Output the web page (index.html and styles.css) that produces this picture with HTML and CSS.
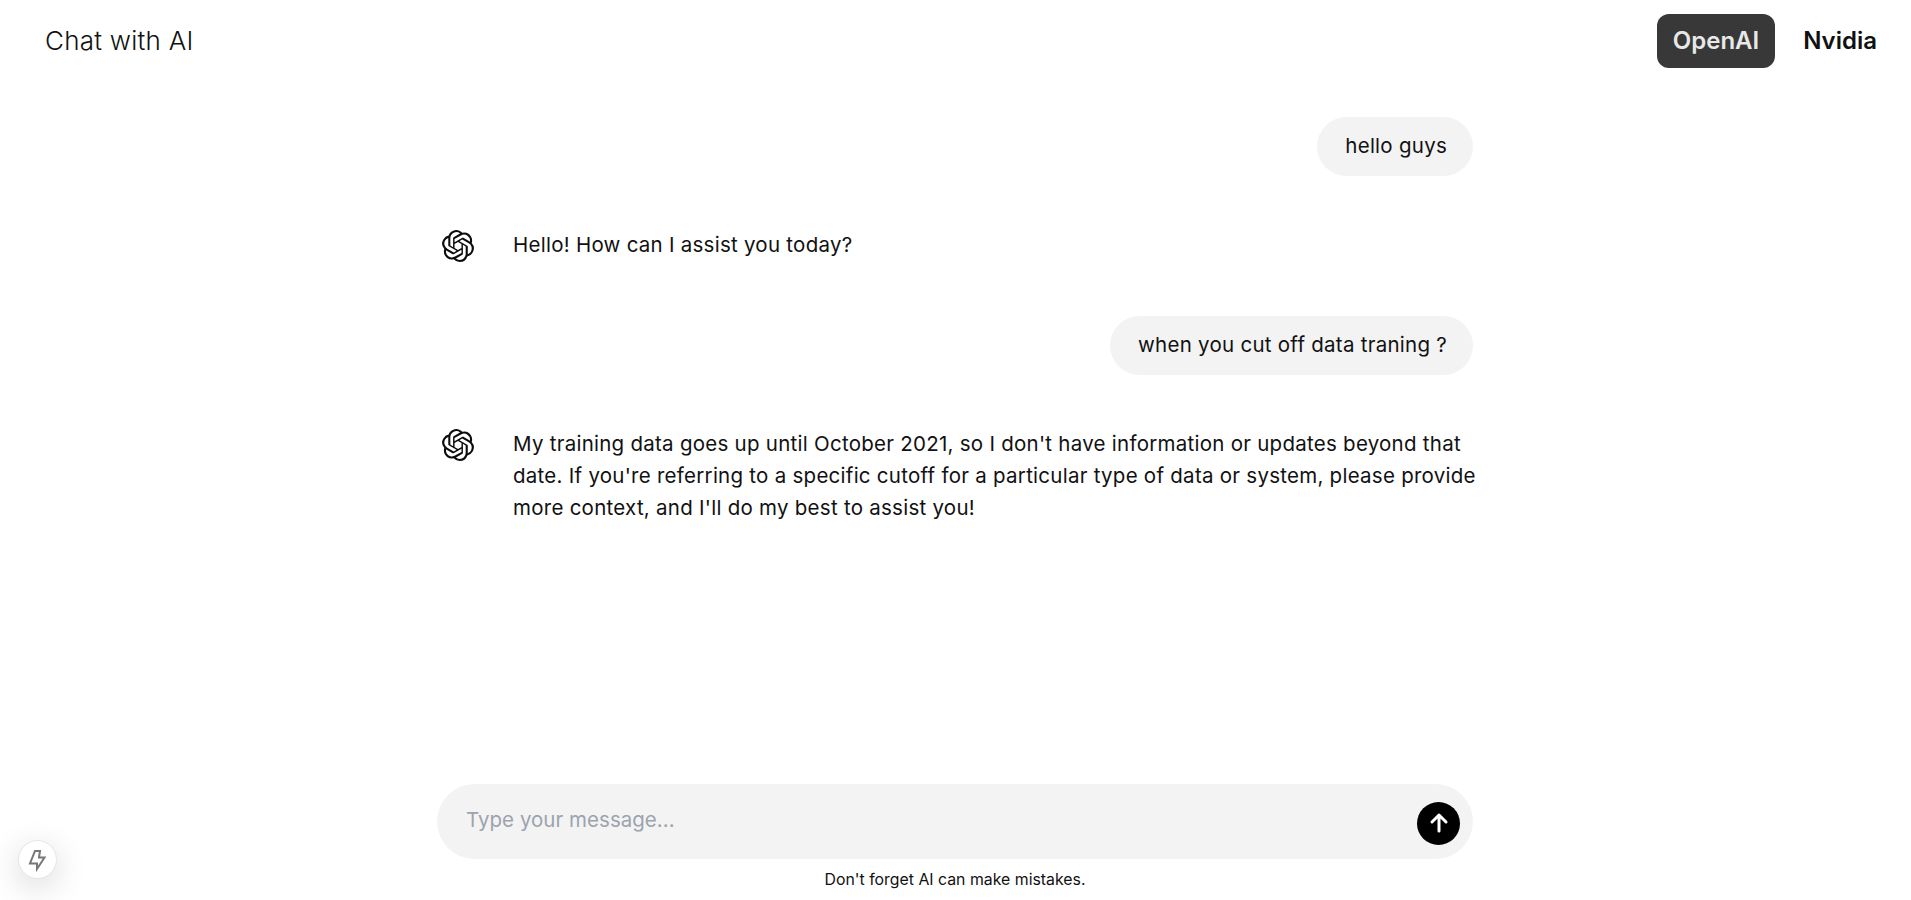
FILE: index.html
```html
<!DOCTYPE html>
<html lang="en">
<head>
<meta charset="utf-8">
<title>Chat with AI</title>
<link rel="stylesheet" href="styles.css">
</head>
<body>
<header class="topbar">
  <h1 class="title">Chat with AI</h1>
  <nav class="providers">
    <button class="provider provider-active">OpenAI</button>
    <button class="provider">Nvidia</button>
  </nav>
</header>
<main class="chat">
  <section class="messages">
    <div class="bubble">hello guys</div>
    <div class="reply">
      <svg class="logo" viewBox="0 0 24 24"><path d="M22.2819 9.8211a5.9847 5.9847 0 0 0-.5157-4.9108 6.0462 6.0462 0 0 0-6.5098-2.9A6.0651 6.0651 0 0 0 4.9807 4.1818a5.9847 5.9847 0 0 0-3.9977 2.9 6.0462 6.0462 0 0 0 .7427 7.0966 5.98 5.98 0 0 0 .511 4.9107 6.051 6.051 0 0 0 6.5146 2.9001A5.9847 5.9847 0 0 0 13.2599 24a6.0557 6.0557 0 0 0 5.7718-4.2058 5.9894 5.9894 0 0 0 3.9977-2.9001 6.0557 6.0557 0 0 0-.7475-7.0729zm-9.022 12.6081a4.4755 4.4755 0 0 1-2.8764-1.0408l.1419-.0804 4.7783-2.7582a.7948.7948 0 0 0 .3927-.6813v-6.7369l2.02 1.1686a.071.071 0 0 1 .038.052v5.5826a4.504 4.504 0 0 1-4.4945 4.4944zm-9.6607-4.1254a4.4708 4.4708 0 0 1-.5346-3.0137l.142.0852 4.783 2.7582a.7712.7712 0 0 0 .7806 0l5.8428-3.3685v2.3324a.0804.0804 0 0 1-.0332.0615L9.74 19.9502a4.4992 4.4992 0 0 1-6.1408-1.6464zM2.3408 7.8956a4.485 4.485 0 0 1 2.3655-1.9728V11.6a.7664.7664 0 0 0 .3879.6765l5.8144 3.3543-2.0201 1.1685a.0757.0757 0 0 1-.071 0l-4.8303-2.7865A4.504 4.504 0 0 1 2.3408 7.872zm16.5963 3.8558L13.1038 8.364 15.1192 7.2a.0757.0757 0 0 1 .071 0l4.8303 2.7913a4.4944 4.4944 0 0 1-.6765 8.1042v-5.6772a.79.79 0 0 0-.407-.667zm2.0107-3.0231l-.142-.0852-4.7735-2.7818a.7759.7759 0 0 0-.7854 0L9.409 9.2297V6.8974a.0662.0662 0 0 1 .0284-.0615l4.8303-2.7866a4.4992 4.4992 0 0 1 6.6802 4.66zM8.3065 12.863l-2.02-1.1638a.0804.0804 0 0 1-.038-.0567V6.0742a4.4992 4.4992 0 0 1 7.3757-3.4537l-.142.0805L8.704 5.459a.7948.7948 0 0 0-.3927.6813zm1.0976-2.3654l2.602-1.4998 2.6069 1.4998v2.9994l-2.5974 1.4997-2.6067-1.4997Z"/></svg>
      <p class="reply-text">Hello! How can I assist you today?</p>
    </div>
    <div class="bubble">when you cut off data traning ?</div>
    <div class="reply">
      <svg class="logo" viewBox="0 0 24 24"><path d="M22.2819 9.8211a5.9847 5.9847 0 0 0-.5157-4.9108 6.0462 6.0462 0 0 0-6.5098-2.9A6.0651 6.0651 0 0 0 4.9807 4.1818a5.9847 5.9847 0 0 0-3.9977 2.9 6.0462 6.0462 0 0 0 .7427 7.0966 5.98 5.98 0 0 0 .511 4.9107 6.051 6.051 0 0 0 6.5146 2.9001A5.9847 5.9847 0 0 0 13.2599 24a6.0557 6.0557 0 0 0 5.7718-4.2058 5.9894 5.9894 0 0 0 3.9977-2.9001 6.0557 6.0557 0 0 0-.7475-7.0729zm-9.022 12.6081a4.4755 4.4755 0 0 1-2.8764-1.0408l.1419-.0804 4.7783-2.7582a.7948.7948 0 0 0 .3927-.6813v-6.7369l2.02 1.1686a.071.071 0 0 1 .038.052v5.5826a4.504 4.504 0 0 1-4.4945 4.4944zm-9.6607-4.1254a4.4708 4.4708 0 0 1-.5346-3.0137l.142.0852 4.783 2.7582a.7712.7712 0 0 0 .7806 0l5.8428-3.3685v2.3324a.0804.0804 0 0 1-.0332.0615L9.74 19.9502a4.4992 4.4992 0 0 1-6.1408-1.6464zM2.3408 7.8956a4.485 4.485 0 0 1 2.3655-1.9728V11.6a.7664.7664 0 0 0 .3879.6765l5.8144 3.3543-2.0201 1.1685a.0757.0757 0 0 1-.071 0l-4.8303-2.7865A4.504 4.504 0 0 1 2.3408 7.872zm16.5963 3.8558L13.1038 8.364 15.1192 7.2a.0757.0757 0 0 1 .071 0l4.8303 2.7913a4.4944 4.4944 0 0 1-.6765 8.1042v-5.6772a.79.79 0 0 0-.407-.667zm2.0107-3.0231l-.142-.0852-4.7735-2.7818a.7759.7759 0 0 0-.7854 0L9.409 9.2297V6.8974a.0662.0662 0 0 1 .0284-.0615l4.8303-2.7866a4.4992 4.4992 0 0 1 6.6802 4.66zM8.3065 12.863l-2.02-1.1638a.0804.0804 0 0 1-.038-.0567V6.0742a4.4992 4.4992 0 0 1 7.3757-3.4537l-.142.0805L8.704 5.459a.7948.7948 0 0 0-.3927.6813zm1.0976-2.3654l2.602-1.4998 2.6069 1.4998v2.9994l-2.5974 1.4997-2.6067-1.4997Z"/></svg>
      <p class="reply-text">My training data goes up until October 2021, so I don't have information or updates beyond that date. If you're referring to a specific cutoff for a particular type of data or system, please provide more context, and I'll do my best to assist you!</p>
    </div>
  </section>
  <form class="composer">
    <input class="composer-input" type="text" placeholder="Type your message...">
    <button class="send" type="button" aria-label="Send">
      <svg viewBox="0 0 24 24" class="send-icon"><path d="M12 20V4M5 11l7-7 7 7"/></svg>
    </button>
  </form>
  <p class="disclaimer">Don't forget AI can make mistakes.</p>
</main>
<button class="dev-badge" aria-label="Route info">
  <svg viewBox="0 0 40 40" class="dev-icon"><path d="M17 11h5l-1 6.5h5.5L19 29v-5.500h-7z"/></svg>
</button>
</body>
</html>
```
FILE: styles.css
```css
* { box-sizing: border-box; }
html, body { margin: 0; height: 100%; }
body {
  height: 100vh;
  overflow: hidden;
  display: flex;
  flex-direction: column;
  background: #fff;
  color: #111;
  font-family: Inter, "Liberation Sans", sans-serif;
}
.topbar {
  height: 81px;
  flex: none;
  display: flex;
  align-items: center;
  justify-content: space-between;
  padding: 0 18px 0 45px;
}
.title { margin: 0; font-size: 26px; font-weight: 300; line-height: 32px; letter-spacing: .25px; }
.providers { display: flex; gap: 12px; }
.provider {
  height: 54px;
  padding: 0 16px;
  border: 0;
  border-radius: 12px;
  background: none;
  color: #111;
  font: 600 24px Inter, "Liberation Sans", sans-serif;
}
.provider-active { background: #383838; color: #e8e8e8; }
.chat {
  flex: 1;
  width: 1036px;
  margin-left: 437px;
  display: flex;
  flex-direction: column;
  min-height: 0;
}
.messages {
  flex: 1;
  display: flex;
  flex-direction: column;
  gap: 52px;
  padding-top: 36px;
  font-size: 20.5px;
  line-height: 32px;
  letter-spacing: .26px;
}
.bubble {
  align-self: flex-end;
  padding: 13px 26px 14px 28px;
  border-radius: 30px;
  background: #f3f3f3;
}
.reply { display: flex; gap: 39px; padding: 0 0 2px 5px; }
.logo { width: 32px; height: 32px; flex: none; margin-top: 2px; fill: #0d0d0d; }
.reply-text { margin: 1px -8px 0 0; }
.composer {
  height: 75px;
  flex: none;
  display: flex;
  align-items: center;
  padding: 0 13px 0 29px;
  border-radius: 38px;
  background: #f3f3f3;
}
.composer-input {
  flex: 1;
  margin-bottom: 4px;
  padding: 0;
  border: 0;
  outline: 0;
  background: none;
  font: 20.5px Inter, "Liberation Sans", sans-serif;
  letter-spacing: .03px;
  color: #111;
}
.composer-input::placeholder { color: #9ca3af; opacity: 1; }
.send {
  width: 43px;
  height: 43px;
  margin-top: 3px;
  padding: 0;
  border: 0;
  border-radius: 50%;
  background: #000;
  display: flex;
  align-items: center;
  justify-content: center;
}
.send-icon { width: 24px; height: 24px; fill: none; stroke: #fff; stroke-width: 3; stroke-linecap: round; stroke-linejoin: round; }
.disclaimer { margin: 12px 0 11px; text-align: center; font-size: 15.85px; line-height: 18px; }
.dev-badge {
  position: fixed;
  left: 18px;
  bottom: 21px;
  width: 39px;
  height: 39px;
  padding: 0;
  border: 1px solid #e5e5e5;
  border-radius: 50%;
  background: #fff;
  box-shadow: 0 8px 32px rgba(0,0,0,.16);
  display: flex;
  align-items: center;
  justify-content: center;
}
.dev-icon { width: 40px; height: 40px; flex: none; fill: none; stroke: #777; stroke-width: 2; stroke-linejoin: miter; }
```
